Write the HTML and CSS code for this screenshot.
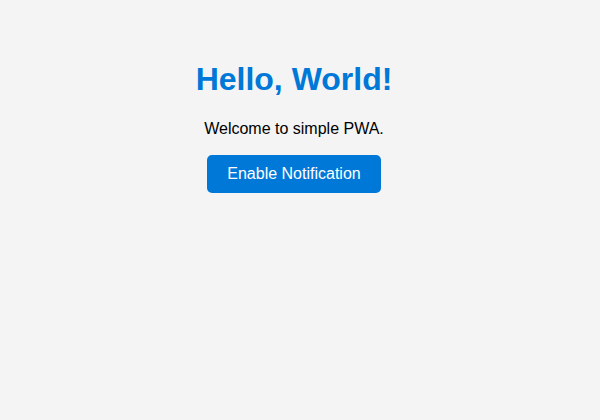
FILE: index.html
```html
<!DOCTYPE html>
<html lang="en">
<head>
<meta charset="utf-8">
<title>Simple PWA</title>
<link rel="stylesheet" href="styles.css">
</head>
<body>
<main class="app">
  <h1 class="title">Hello, World!</h1>
  <p class="lead">Welcome to simple PWA.</p>
  <button class="btn">Enable Notification</button>
</main>
</body>
</html>
```
FILE: styles.css
```css
html, body { height: 100%; }
body {
  margin: 0;
  background: #f4f4f4;
  font-family: "Liberation Sans", Arial, sans-serif;
  color: #000;
}
.app {
  text-align: center;
  padding: 40px 32px 40px 20px;
}
.title {
  color: #0078d7;
  font-size: 32px;
  font-weight: bold;
  margin: 21px 0 22px;
}
.lead {
  font-size: 16px;
  margin: 16px 0 17px;
}
.btn {
  font-family: inherit;
  font-size: 16px;
  color: #fff;
  background: #0078d7;
  border: none;
  border-radius: 5px;
  padding: 10px 20px;
  cursor: pointer;
}
```
